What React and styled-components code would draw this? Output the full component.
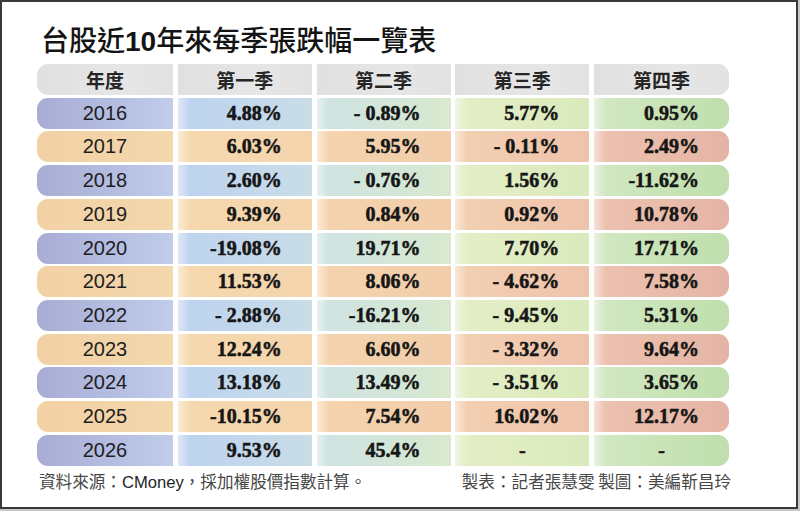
import styled, { createGlobalStyle, css } from "styled-components";

const GlobalStyle = createGlobalStyle`
  html, body {
    margin: 0;
    padding: 0;
    background: #ffffff;
  }
  * {
    box-sizing: border-box;
  }
`;

const cool = [
  "#a9acd4, #b4bde1 55%, #c1cdea",
  "#bdd2ef, #c3d8ec 55%, #c9dde6",
  "#cee3e4, #d3e6d8 55%, #d8e9cd",
  "#e4eec7, #dfecc0 55%, #d9eabb",
  "#d2e8c2, #c8e3b6 55%, #bedfad",
];
const warm = [
  "#f2d1a5, #f3d4a9 55%, #f4d7ad",
  "#f5d8ae, #f5d6ad 55%, #f4d4ad",
  "#f4d4ae, #f3d0ac 55%, #f2ccab",
  "#f3d0b2, #f1c9ae 55%, #eec3ac",
  "#edc2b0, #e9bba9 55%, #e5b3a5",
];

const rows = [
  ["2016", "4.88%", "- 0.89%", "5.77%", "0.95%"],
  ["2017", "6.03%", "5.95%", "- 0.11%", "2.49%"],
  ["2018", "2.60%", "- 0.76%", "1.56%", "-11.62%"],
  ["2019", "9.39%", "0.84%", "0.92%", "10.78%"],
  ["2020", "-19.08%", "19.71%", "7.70%", "17.71%"],
  ["2021", "11.53%", "8.06%", "- 4.62%", "7.58%"],
  ["2022", "- 2.88%", "-16.21%", "- 9.45%", "5.31%"],
  ["2023", "12.24%", "6.60%", "- 3.32%", "9.64%"],
  ["2024", "13.18%", "13.49%", "- 3.51%", "3.65%"],
  ["2025", "-10.15%", "7.54%", "16.02%", "12.17%"],
  ["2026", "9.53%", "45.4%", "-", "-"],
];

const heads = ["年度", "第一季", "第二季", "第三季", "第四季"];

const Page = styled.div`
  width: 800px;
  height: 511px;
  background: #c9c9c9;
  padding: 0 2px 2px 0;
`;

const Frame = styled.div`
  width: 100%;
  height: 100%;
  background: #ffffff;
  border: 2px solid #3a3a3a;
  padding: 23px 0 0 35px;
  display: flex;
  flex-direction: column;
`;

const Title = styled.h1`
  margin: 0 0 8px 4px;
  font-family: "Noto Sans CJK TC", "Noto Sans CJK SC", sans-serif;
  font-size: 28px;
  line-height: 28px;
  font-weight: 500;
  color: #141414;
  letter-spacing: 0;
`;

const Digits = styled.span`
  font-family: "Liberation Sans", Arial, sans-serif;
  font-weight: 700;
`;

const Table = styled.div`
  width: 692px;
  display: grid;
  grid-template-columns: 136px 134px 134px 134px 135px;
  column-gap: 4.75px;
  grid-auto-rows: 31px;
  row-gap: 2.73px;
`;

const cellShape = css`
  display: flex;
  align-items: center;
  border-radius: ${(p) =>
    p.$col === 0 ? "11px 0 0 11px" : p.$col === 4 ? "0 11px 11px 0" : "0"};
`;

const HeadCell = styled.div`
  ${cellShape}
  justify-content: center;
  background: linear-gradient(to right, #e0e0e0, #e6e6e6 60%, #e2e2e2);
  font-family: "Noto Sans CJK TC", "Noto Sans CJK SC", sans-serif;
  font-weight: 700;
  font-size: 19px;
  color: #262626;
`;

const Cell = styled.div`
  ${cellShape}
  justify-content: ${(p) => (p.$center ? "center" : "flex-end")};
  padding-right: ${(p) => (p.$center ? "0" : "30px")};
  background: ${(p) =>
    p.$col === 0
      ? `linear-gradient(to right, ${p.$stops})`
      : `linear-gradient(to right, rgba(255,255,255,0.5), rgba(255,255,255,0) 12px),
         linear-gradient(to right, ${p.$stops})`};
  font-family: "Liberation Serif", "Times New Roman", serif;
  font-weight: 700;
  font-size: 20px;
  color: #161616;
  -webkit-text-stroke: 0.55px #161616;
  white-space: pre;
`;

const YearCell = styled.div`
  ${cellShape}
  justify-content: center;
  background: linear-gradient(to right, ${(p) => p.$stops});
  font-family: "Liberation Sans", Arial, sans-serif;
  font-size: 20px;
  color: #1e1e1e;
`;

const Footer = styled.div`
  width: 694px;
  margin-top: 5px;
  display: flex;
  justify-content: space-between;
  font-family: "Noto Sans CJK TC", "Noto Sans CJK SC", sans-serif;
  font-size: 16.6px;
  line-height: 20px;
  color: #474747;
`;

const Note = styled.span`
  margin-left: 2px;
`;

const Latin = styled.span`
  font-family: "Liberation Sans", Arial, sans-serif;
  color: #262626;
`;

export default function App() {
  return (
    <>
      <GlobalStyle />
      <Page>
        <Frame>
          <Title>
            台股近<Digits>10</Digits>年來每季張跌幅一覽表
          </Title>
          <Table>
            {heads.map((h, i) => (
              <HeadCell key={h} $col={i}>
                {h}
              </HeadCell>
            ))}
            {rows.map((row, r) => {
              const palette = r % 2 === 0 ? cool : warm;
              return row.map((v, c) =>
                c === 0 ? (
                  <YearCell key={`${r}-${c}`} $col={c} $stops={palette[c]}>
                    {v}
                  </YearCell>
                ) : (
                  <Cell
                    key={`${r}-${c}`}
                    $col={c}
                    $stops={palette[c]}
                    $center={v === "-"}
                  >
                    {v}
                  </Cell>
                )
              );
            })}
          </Table>
          <Footer>
            <Note>
              資料來源：<Latin>CMoney</Latin>，採加權股價指數計算。
            </Note>
            <span>製表：記者張慧雯 製圖：美編靳昌玲</span>
          </Footer>
        </Frame>
      </Page>
    </>
  );
}
